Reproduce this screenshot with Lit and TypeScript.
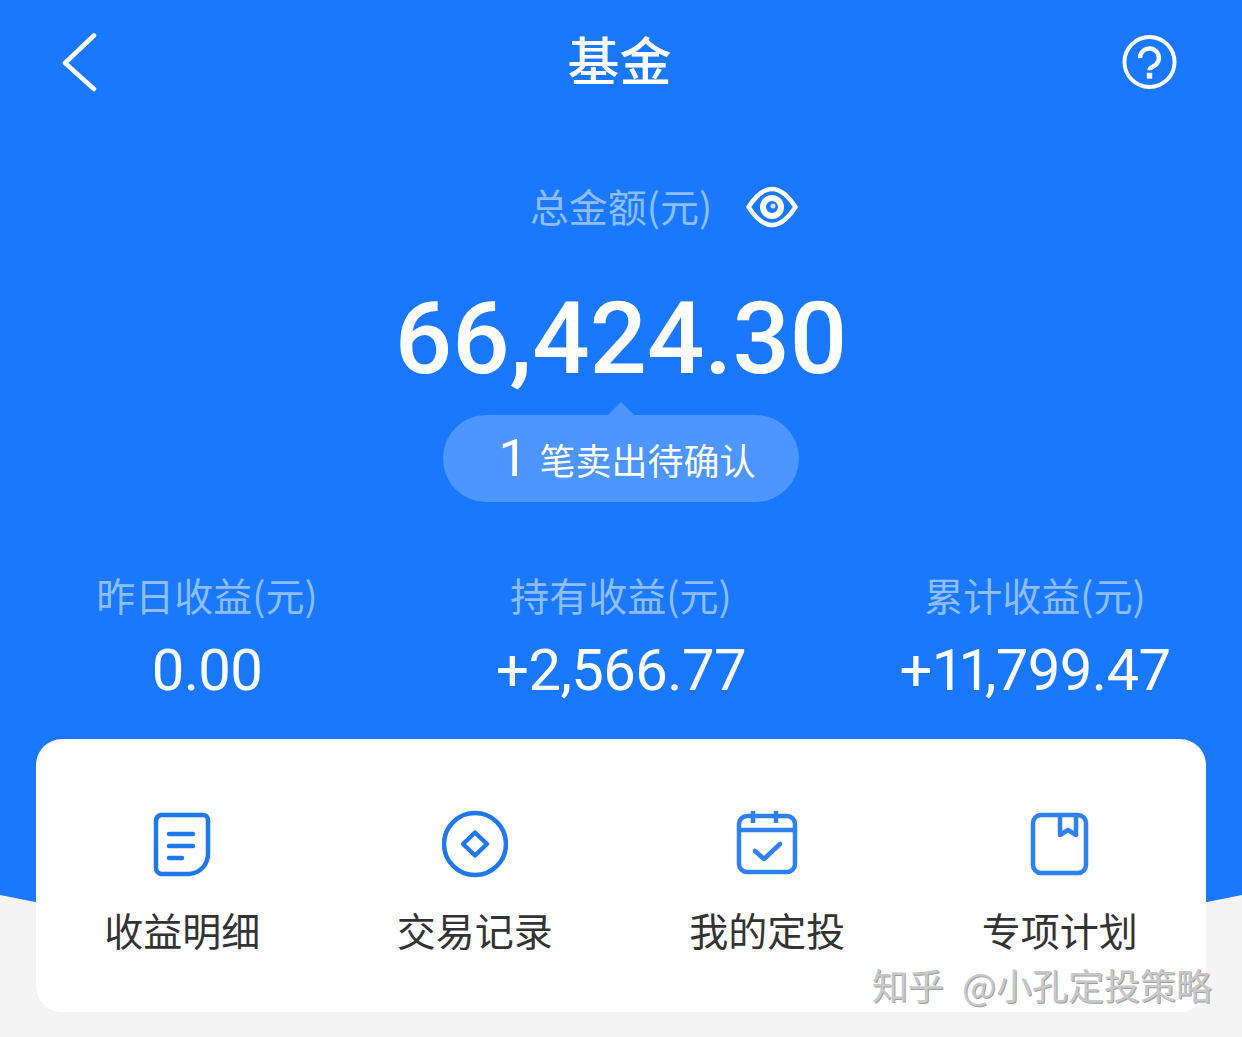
import { LitElement, html, css, svg } from "lit";
import { customElement } from "lit/decorators.js";

const icons = [
  svg`<svg class="ic" width="66" height="70" viewBox="0 0 66 70" fill="none" stroke="#1f78ec" stroke-width="4.500" stroke-linecap="round" stroke-linejoin="round"><path d="M12 7H54a5 5 0 0 1 5 5V46A20 20 0 0 1 40 66H12a6 6 0 0 1-5-6V12a6 6 0 0 1 5-5Z"/><path d="M20 26H44M20 38H44M20 50H33"/></svg>`,
  svg`<svg class="ic" width="66" height="70" viewBox="0 0 66 70" fill="none" stroke="#1f78ec" stroke-width="4.500"><circle cx="33" cy="36" r="31"/><path d="M33 24.500L45 36L33 47.500L21 36Z" stroke-linejoin="round"/></svg>`,
  svg`<svg class="ic" width="66" height="70" viewBox="0 0 66 70" fill="none" stroke="#2f80f0" stroke-width="4.500" stroke-linecap="round" stroke-linejoin="round"><rect x="5" y="8" width="56" height="56" rx="8"/><path d="M5 22H61"/><path d="M19 3V15M42 3V15" stroke-linecap="butt"/><path d="M21 43L30 51L46 36"/></svg>`,
  svg`<svg class="ic" width="66" height="70" viewBox="0 0 66 70" fill="none" stroke="#2f80f0" stroke-width="4.500" stroke-linejoin="round"><rect x="6" y="7" width="53" height="58" rx="8"/><path d="M33 8V27L41 22L49 27V8"/></svg>`,
];

@customElement("app-root")
export class AppRoot extends LitElement {
  static styles = css`
    :host {
      display: block;
      position: relative;
      height: 1037px;
      overflow: hidden;
      background: #f4f4f4;
      font-family: "Noto Sans CJK SC", "Noto Sans", sans-serif;
      color: #fff;
    }
    .hero-bg {
      position: absolute;
      inset: 0 0 auto 0;
      height: 1037px;
      background: #1a78ff;
      clip-path: path("M0 0H1242V895Q621 1025 0 895Z");
    }
    .content { position: relative; }
    .header {
      height: 124px;
      display: grid;
      grid-template-columns: 1fr auto 1fr;
      align-items: center;
      padding: 0 65px 0 62px;
    }
    .help { justify-self: end; }
    .title { font-size: 52px; font-weight: 500; line-height: 60px; padding-bottom: 6px; }
    .total-label {
      margin-top: 55px;
      height: 52px;
      display: flex;
      justify-content: center;
      align-items: center;
      position: relative;
      font-size: 39px;
      line-height: 52px;
      color: #8dbcff;
    }
    .eye { position: absolute; left: 746px; top: 7px; }
    .amount {
      margin-top: 48px;
      text-align: center;
      font-family: Roboto, sans-serif;
      font-weight: 500;
      font-size: 101px;
      line-height: 120px;
    }
    .pill-row { display: flex; justify-content: center; margin-top: 16px; }
    .pill {
      position: relative;
      width: 356px;
      height: 87px;
      box-sizing: border-box;
      padding-left: 12px;
      border-radius: 44px;
      background: #4d95ff;
      display: flex;
      align-items: center;
      justify-content: center;
      gap: 12px;
      font-size: 36px;
    }
    .pill::before {
      content: "";
      position: absolute;
      left: 164px;
      top: -13px;
      width: 28px;
      height: 14px;
      background: #4d95ff;
      clip-path: polygon(50% 0, 100% 100%, 0 100%);
    }
    .pill b { font: 400 52px/1 Roboto, sans-serif; }
    .stats {
      margin-top: 66px;
      display: grid;
      grid-template-columns: repeat(3, 1fr);
      text-align: center;
    }
    .stat-label { font-size: 39px; line-height: 52px; color: #8dbcff; }
    .stat-value {
      font-family: Roboto, sans-serif;
      font-weight: 400;
      font-size: 58px;
      line-height: 70px;
      margin-top: 15px;
      letter-spacing: -0.6px;
    }
    .ones { letter-spacing: -6px; }
    .card {
      margin: 34px 36px 0;
      height: 273px;
      background: #fff;
      border-radius: 26px;
      display: grid;
      grid-template-columns: repeat(4, 1fr);
    }
    .item {
      display: flex;
      flex-direction: column;
      align-items: center;
      padding-top: 69px;
      color: #333;
      font-size: 39px;
      line-height: 52px;
    }
    .ic { display: block; }
    .item span { margin-top: 25px; }
    .watermark {
      position: absolute;
      left: 872px;
      top: 959px;
      font-size: 36px;
      word-spacing: 10px;
      line-height: 50px;
      color: #c8c8c8;
      text-shadow: 1px 1px 0 #a0a0a0;
      white-space: nowrap;
    }
  `;

  render() {
    return html`
      <div class="hero-bg"></div>
      <div class="content">
        <div class="header">
          <svg width="36" height="60" viewBox="0 0 36 60" fill="none" stroke="#fff" stroke-width="4.500" stroke-linecap="round" stroke-linejoin="round"><path d="M32 3.500L3 31L32 57"/></svg>
          <div class="title">基金</div>
          <svg class="help" width="55" height="56" viewBox="0 0 56 56" fill="none" stroke="#fff" stroke-width="4"><circle cx="28" cy="28" r="25.500"/><path d="M18.500 24a9.500 9.500 0 1 1 15 7.500c-3 2-5.500 2.500-5.500 5" stroke-width="4.500"/><path d="M28 39V45" stroke-width="5.500"/></svg>
        </div>
        <div class="total-label">
          <span>总金额(元)</span>
          <svg class="eye" width="52" height="42" viewBox="0 0 52 42" fill="none" stroke="#fff"><path d="M2.500 21C9 11 17 3 26 3s17 8 23.500 18C43 31 35 39 26 39S9 31 2.500 21Z" stroke-width="4.500" stroke-linejoin="round"/><circle cx="26" cy="21" r="9" stroke-width="6"/><circle cx="27" cy="20" r="2.500" fill="#cfe2ff" stroke="none"/></svg>
        </div>
        <div class="amount">66,424.30</div>
        <div class="pill-row"><div class="pill"><b>1</b><span>笔卖出待确认</span></div></div>
        <div class="stats">
          <div><div class="stat-label">昨日收益(元)</div><div class="stat-value">0.00</div></div>
          <div><div class="stat-label">持有收益(元)</div><div class="stat-value">+2,566.77</div></div>
          <div><div class="stat-label">累计收益(元)</div><div class="stat-value">+<span class="ones">11</span>,799.47</div></div>
        </div>
        <div class="card">
          ${["收益明细", "交易记录", "我的定投", "专项计划"].map(
            (t, i) => html`<div class="item">${icons[i]}<span>${t}</span></div>`
          )}
        </div>
      </div>
      <div class="watermark">知乎 @小孔定投策略</div>
    `;
  }
}
